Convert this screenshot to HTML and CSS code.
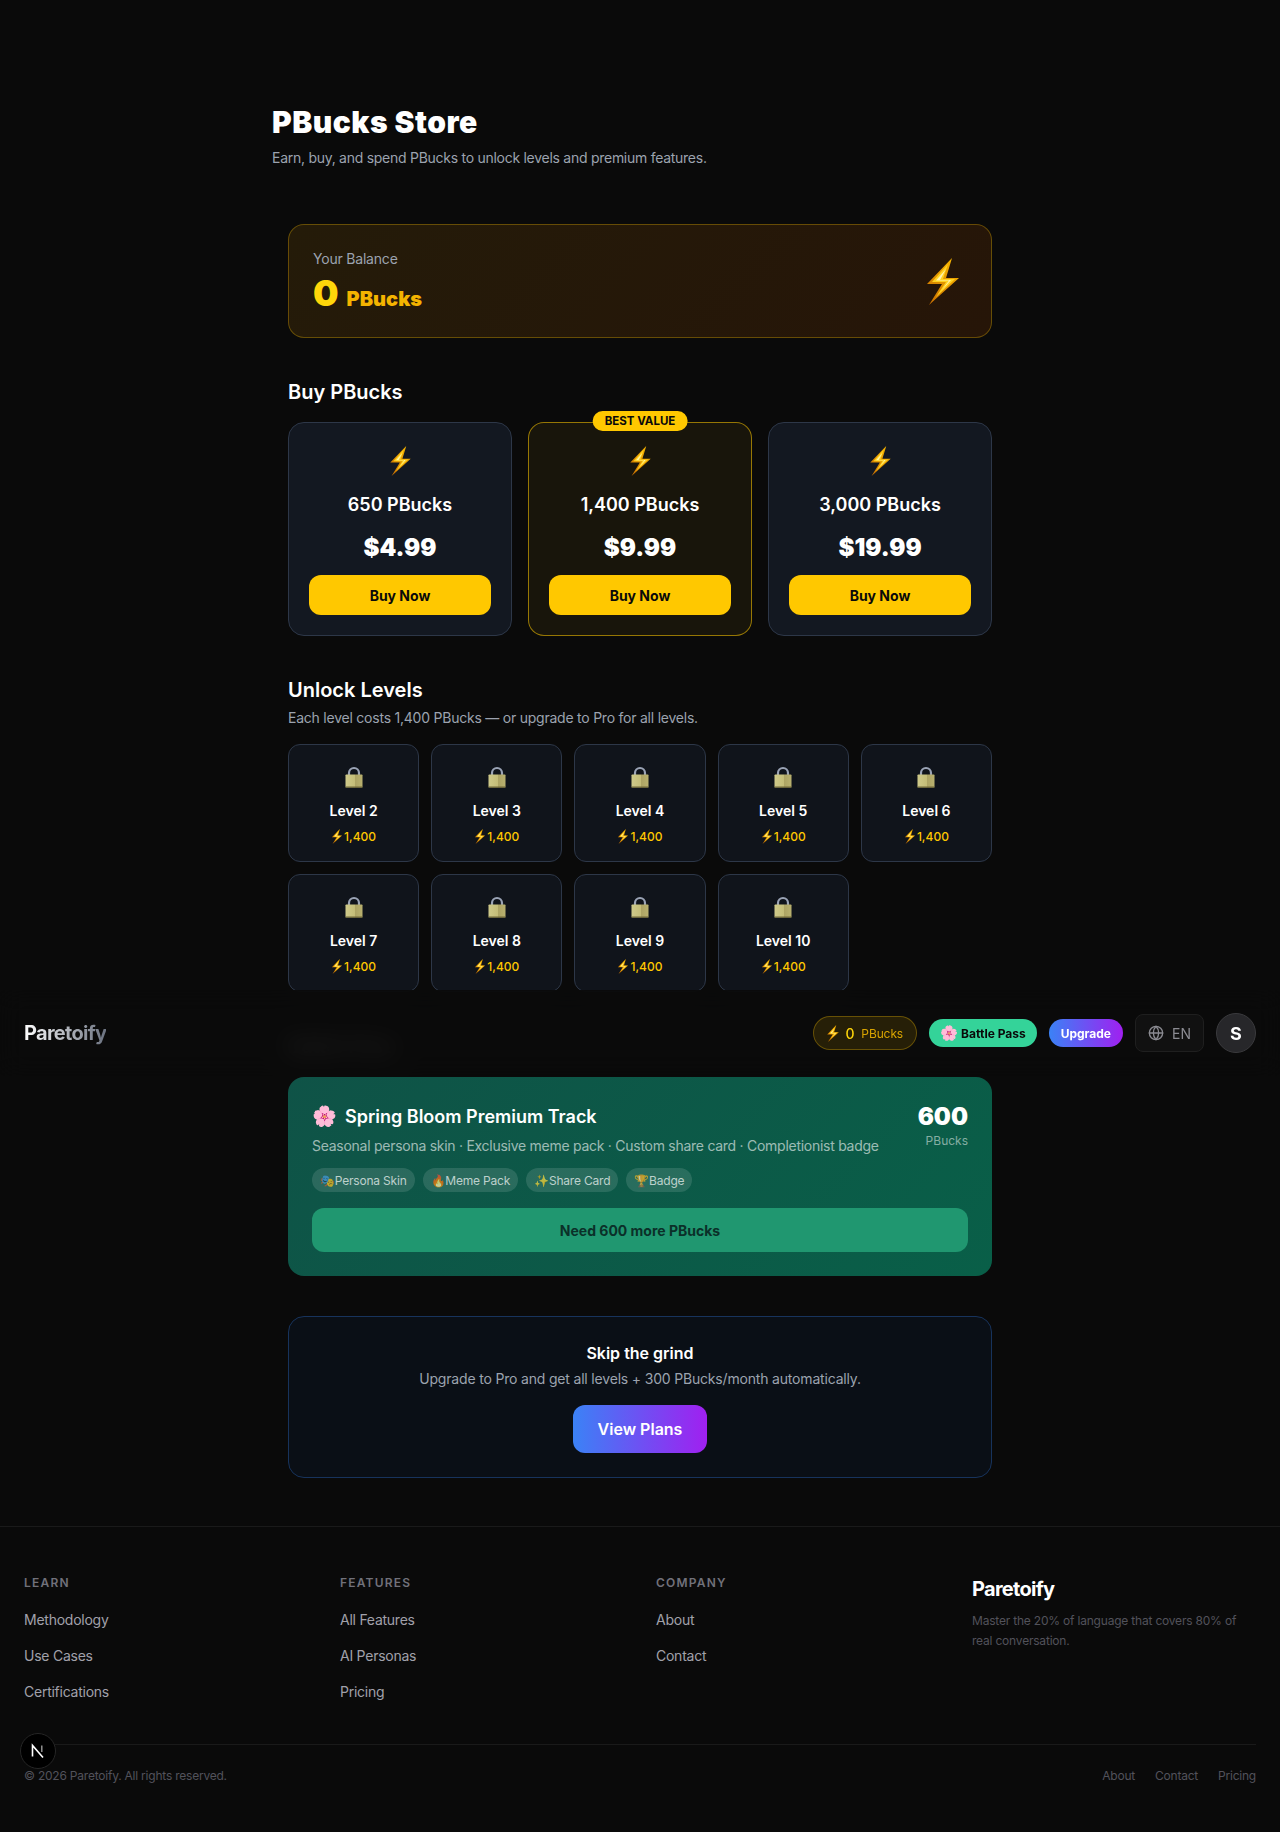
FILE: index.html
```html
<!DOCTYPE html>
<html lang="en">
<head>
    <meta charset="UTF-8">
    <meta name="viewport" content="width=device-width, initial-scale=1.0">
    <title>PBucks Store - Paretoify</title>
    <link rel="stylesheet" href="styles.css">
</head>
<body>
    <!-- shared icons -->
    <svg class="icon-sprite" width="0" height="0">
        <defs>
            <linearGradient id="boltEdge" x1="0.8" y1="0" x2="0.1" y2="1">
                <stop offset="0" stop-color="#f7b500"/>
                <stop offset="1" stop-color="#c96f00"/>
            </linearGradient>
            <linearGradient id="lockBody" x1="0" y1="0" x2="1" y2="0">
                <stop offset="0" stop-color="#cfca8a"/>
                <stop offset="0.55" stop-color="#c4bd78"/>
                <stop offset="0.56" stop-color="#aca363"/>
                <stop offset="1" stop-color="#b9b16f"/>
            </linearGradient>
            <symbol id="bolt" viewBox="0 0 32 47">
                <path d="M25 0 0 26h15L2 47l30-27H19z" fill="url(#boltEdge)"/>
                <path d="M21 6 5 24h14L9 39l19-18H16z" fill="#ffd21f"/>
                <path d="M19 11 9 22.500h13L15 32l9-10H13z" fill="#fff3b0"/>
            </symbol>
            <symbol id="lock" viewBox="0 0 18 22">
                <path d="M4 10V7a5 5 0 0 1 10 0v3" fill="none" stroke="#9aa3b5" stroke-width="2.200"/>
                <rect x="0.500" y="8.500" width="17" height="13" rx="0.800" fill="url(#lockBody)"/>
                <rect x="0.500" y="20.500" width="17" height="1.200" fill="#6e6738"/>
            </symbol>
        </defs>
    </svg>

    <header class="navbar">
        <a href="#" class="nav-logo">Paretoify</a>
        <div class="nav-actions">
            <a href="#" class="nav-balance"><svg class="bolt-nav"><use href="#bolt"/></svg><b>0</b><span>PBucks</span></a>
            <a href="#" class="nav-pass"><span class="nav-flower">🌸</span>Battle Pass</a>
            <a href="#" class="nav-upgrade">Upgrade</a>
            <button class="nav-lang">
                <svg width="16" height="16" viewBox="0 0 24 24" fill="none" stroke="currentColor" stroke-width="2" stroke-linecap="round" stroke-linejoin="round"><circle cx="12" cy="12" r="10"/><path d="M12 2a14.500 14.500 0 0 0 0 20 14.500 14.500 0 0 0 0-20"/><path d="M2 12h20"/></svg>
                EN
            </button>
            <div class="nav-avatar">S</div>
        </div>
    </header>

    <main class="store">
        <div class="store-head">
            <h1 class="store-title">PBucks Store</h1>
            <p class="store-subtitle">Earn, buy, and spend PBucks to unlock levels and premium features.</p>
        </div>

        <div class="store-body">
            <section class="balance-card">
                <div class="balance-info">
                    <p class="balance-label">Your Balance</p>
                    <p class="balance-value"><b>0</b><span>PBucks</span></p>
                </div>
                <svg class="bolt-large"><use href="#bolt"/></svg>
            </section>

            <section class="section">
                <h2 class="section-title">Buy PBucks</h2>
                <div class="packs">
                    <div class="pack">
                        <div class="pack-icon"><svg class="bolt-pack"><use href="#bolt"/></svg></div>
                        <div class="pack-name">650 PBucks</div>
                        <div class="pack-price">$4.99</div>
                        <button class="pack-btn">Buy Now</button>
                    </div>
                    <div class="pack pack-best">
                        <span class="pack-badge">BEST VALUE</span>
                        <div class="pack-icon"><svg class="bolt-pack"><use href="#bolt"/></svg></div>
                        <div class="pack-name">1,400 PBucks</div>
                        <div class="pack-price">$9.99</div>
                        <button class="pack-btn">Buy Now</button>
                    </div>
                    <div class="pack">
                        <div class="pack-icon"><svg class="bolt-pack"><use href="#bolt"/></svg></div>
                        <div class="pack-name">3,000 PBucks</div>
                        <div class="pack-price">$19.99</div>
                        <button class="pack-btn">Buy Now</button>
                    </div>
                </div>
            </section>

            <section class="section">
                <h2 class="section-title section-title-tight">Unlock Levels</h2>
                <p class="section-note">Each level costs 1,400 PBucks — or upgrade to Pro for all levels.</p>
                <div class="levels">
                    <div class="level"><div class="level-lock"><svg class="lock-icon"><use href="#lock"/></svg></div><div class="level-name">Level 2</div><div class="level-cost"><svg class="bolt-small"><use href="#bolt"/></svg>1,400</div></div>
                    <div class="level"><div class="level-lock"><svg class="lock-icon"><use href="#lock"/></svg></div><div class="level-name">Level 3</div><div class="level-cost"><svg class="bolt-small"><use href="#bolt"/></svg>1,400</div></div>
                    <div class="level"><div class="level-lock"><svg class="lock-icon"><use href="#lock"/></svg></div><div class="level-name">Level 4</div><div class="level-cost"><svg class="bolt-small"><use href="#bolt"/></svg>1,400</div></div>
                    <div class="level"><div class="level-lock"><svg class="lock-icon"><use href="#lock"/></svg></div><div class="level-name">Level 5</div><div class="level-cost"><svg class="bolt-small"><use href="#bolt"/></svg>1,400</div></div>
                    <div class="level"><div class="level-lock"><svg class="lock-icon"><use href="#lock"/></svg></div><div class="level-name">Level 6</div><div class="level-cost"><svg class="bolt-small"><use href="#bolt"/></svg>1,400</div></div>
                    <div class="level"><div class="level-lock"><svg class="lock-icon"><use href="#lock"/></svg></div><div class="level-name">Level 7</div><div class="level-cost"><svg class="bolt-small"><use href="#bolt"/></svg>1,400</div></div>
                    <div class="level"><div class="level-lock"><svg class="lock-icon"><use href="#lock"/></svg></div><div class="level-name">Level 8</div><div class="level-cost"><svg class="bolt-small"><use href="#bolt"/></svg>1,400</div></div>
                    <div class="level"><div class="level-lock"><svg class="lock-icon"><use href="#lock"/></svg></div><div class="level-name">Level 9</div><div class="level-cost"><svg class="bolt-small"><use href="#bolt"/></svg>1,400</div></div>
                    <div class="level"><div class="level-lock"><svg class="lock-icon"><use href="#lock"/></svg></div><div class="level-name">Level 10</div><div class="level-cost"><svg class="bolt-small"><use href="#bolt"/></svg>1,400</div></div>
                </div>
            </section>

            <section class="section">
                <h2 class="section-title section-title-pass">Battle Pass</h2>
                <div class="track">
                    <div class="track-top">
                        <div>
                            <h3 class="track-title"><span class="track-flower">🌸</span>Spring Bloom Premium Track</h3>
                            <p class="track-desc">Seasonal persona skin · Exclusive meme pack · Custom share card · Completionist badge</p>
                            <div class="track-chips">
                                <span class="chip">🎭Persona Skin</span>
                                <span class="chip">🔥Meme Pack</span>
                                <span class="chip">✨Share Card</span>
                                <span class="chip">🏆Badge</span>
                            </div>
                        </div>
                        <div class="track-cost">
                            <div class="track-amount">600</div>
                            <div class="track-unit">PBucks</div>
                        </div>
                    </div>
                    <button class="track-btn">Need 600 more PBucks</button>
                </div>
            </section>

            <section class="skip-card">
                <h3 class="skip-title">Skip the grind</h3>
                <p class="skip-text">Upgrade to Pro and get all levels + 300 PBucks/month automatically.</p>
                <a href="#" class="skip-btn">View Plans</a>
            </section>
        </div>
    </main>

    <footer class="footer">
        <div class="footer-grid">
            <div>
                <h4 class="footer-heading">LEARN</h4>
                <a href="#" class="footer-link">Methodology</a>
                <a href="#" class="footer-link">Use Cases</a>
                <a href="#" class="footer-link">Certifications</a>
            </div>
            <div>
                <h4 class="footer-heading">FEATURES</h4>
                <a href="#" class="footer-link">All Features</a>
                <a href="#" class="footer-link">AI Personas</a>
                <a href="#" class="footer-link">Pricing</a>
            </div>
            <div>
                <h4 class="footer-heading">COMPANY</h4>
                <a href="#" class="footer-link">About</a>
                <a href="#" class="footer-link">Contact</a>
            </div>
            <div>
                <div class="footer-brand">Paretoify</div>
                <p class="footer-about">Master the 20% of language that covers 80% of real conversation.</p>
            </div>
        </div>
        <div class="footer-bottom">
            <span>© 2026 Paretoify. All rights reserved.</span>
            <div class="footer-bottom-links">
                <a href="#">About</a>
                <a href="#">Contact</a>
                <a href="#">Pricing</a>
            </div>
        </div>
    </footer>

    <div class="dev-badge">
        <svg width="18" height="18" viewBox="0 0 18 18" fill="none"><path d="M3.500 14.500V3.500L14 15.500" stroke="#fff" stroke-width="1.600"/><path d="M12.800 3.500V10" stroke="#999" stroke-width="1.400"/></svg>
    </div>
</body>
</html>
```
FILE: styles.css
```css
* {
    margin: 0;
    padding: 0;
    box-sizing: border-box;
}

body {
    font-family: Inter, "Noto Sans", sans-serif;
    background: #0a0a0a;
    color: #fff;
    min-height: 100vh;
    position: relative;
}

a {
    text-decoration: none;
    color: inherit;
}

button {
    font-family: inherit;
    border: none;
    cursor: pointer;
}

.icon-sprite {
    display: block;
    position: absolute;
}

.bolt-large {
    width: 32px;
    height: 47px;
    margin-right: 8px;
}

.bolt-pack {
    width: 21px;
    height: 30px;
}

.bolt-nav {
    width: 12px;
    height: 17px;
}

.bolt-small {
    width: 12px;
    height: 15px;
    vertical-align: -3px;
    margin-right: 1px;
}

.lock-icon {
    width: 18px;
    height: 22px;
}

.navbar {
    position: absolute;
    top: 990px;
    left: 0;
    right: 0;
    height: 86px;
    padding: 0 24px;
    display: flex;
    align-items: center;
    justify-content: space-between;
    background: rgba(10, 10, 10, 0.9);
    backdrop-filter: blur(12px);
    z-index: 10;
}

.nav-logo {
    font-size: 20px;
    font-weight: 700;
    letter-spacing: -0.7px;
    background: linear-gradient(90deg, #fff, #6b7280);
    -webkit-background-clip: text;
    background-clip: text;
    color: transparent;
}

.nav-actions {
    display: flex;
    align-items: center;
    gap: 12px;
}

.nav-balance {
    height: 34px;
    padding: 0 13px;
    display: flex;
    align-items: center;
    gap: 6px;
    border: 1px solid rgba(255, 200, 0, 0.3);
    border-radius: 17px;
    background: rgba(255, 200, 0, 0.12);
    font-size: 12px;
    letter-spacing: -0.1px;
    color: #d9a400;
}

.nav-balance b {
    font-size: 14px;
    font-weight: 500;
    color: #ffd60a;
    margin-right: 1px;
}

.nav-pass {
    height: 28px;
    padding: 0 11px;
    display: flex;
    align-items: center;
    gap: 3px;
    border-radius: 14px;
    background: #34d399;
    color: #0a0a0a;
    font-size: 12px;
    font-weight: 700;
}

.nav-flower {
    font-size: 14.500px;
}

.nav-upgrade {
    height: 28px;
    padding: 0 12px;
    display: flex;
    align-items: center;
    border-radius: 14px;
    background: linear-gradient(90deg, #3b82f6, #a020f0);
    font-size: 12px;
    font-weight: 700;
}

.nav-lang {
    height: 38px;
    padding: 0 12px;
    display: flex;
    align-items: center;
    gap: 8px;
    border: 1px solid #1f1f1f;
    border-radius: 8px;
    background: #111;
    color: #8b8b92;
    font-size: 14px;
}

.nav-avatar {
    width: 40px;
    height: 40px;
    display: flex;
    align-items: center;
    justify-content: center;
    border: 1px solid #3a3a3d;
    border-radius: 50%;
    background: #27272a;
    font-size: 18px;
    font-weight: 700;
}

.store {
    width: 736px;
    margin: 0 auto;
    padding-top: 104px;
}

.store-head {
    margin-bottom: 56px;
}

.store-title {
    font-size: 30px;
    line-height: 36px;
    font-weight: 900;
    letter-spacing: 0.5px;
    margin-bottom: 8px;
}

.store-subtitle {
    font-size: 14px;
    line-height: 20px;
    letter-spacing: -0.27px;
    color: #9ca3af;
}

.store-body {
    padding: 0 16px;
}

.balance-card {
    height: 114px;
    padding: 0 24px;
    display: flex;
    align-items: center;
    justify-content: space-between;
    border: 1px solid rgba(255, 200, 0, 0.3);
    border-radius: 16px;
    background: linear-gradient(135deg, #241b09, #261508);
}

.balance-info {
    align-self: flex-start;
    padding-top: 24px;
}

.balance-label {
    font-size: 14px;
    line-height: 20px;
    letter-spacing: -0.2px;
    color: #9ca3af;
    margin-bottom: 4px;
}

.balance-value {
    display: flex;
    align-items: baseline;
    gap: 8px;
    line-height: 40px;
}

.balance-value b {
    font-size: 36px;
    font-weight: 900;
    color: #ffd60a;
}

.balance-value span {
    font-size: 20px;
    font-weight: 900;
    color: #f4b400;
}

.section {
    margin-top: 40px;
}

.section-title {
    font-size: 20px;
    line-height: 28px;
    font-weight: 600;
    margin-bottom: 16px;
}

.section-title-tight {
    margin-bottom: 4px;
}

.section-title-pass {
    margin-bottom: 17px;
}

.section-note {
    font-size: 14px;
    line-height: 20px;
    letter-spacing: -0.23px;
    color: #9ca3af;
    margin-bottom: 16px;
}

.packs {
    display: grid;
    grid-template-columns: repeat(3, 1fr);
    gap: 16px;
}

.pack {
    position: relative;
    padding: 20px;
    text-align: center;
    border: 1px solid #2d3748;
    border-radius: 16px;
    background: #131821;
}

.pack-best {
    border-color: rgba(255, 200, 0, 0.55);
    background: #18150b;
}

.pack-badge {
    position: absolute;
    top: -12px;
    left: 50%;
    transform: translateX(-50%);
    height: 20px;
    padding: 0 12px;
    display: flex;
    align-items: center;
    white-space: nowrap;
    border-radius: 10px;
    background: #ffc800;
    color: #0a0a0a;
    font-size: 11.500px;
    font-weight: 700;
}

.pack-icon {
    height: 36px;
    display: flex;
    align-items: center;
    justify-content: center;
    margin-bottom: 12px;
}

.pack-name {
    font-size: 18px;
    line-height: 28px;
    font-weight: 600;
    margin-bottom: 13px;
}

.pack-price {
    font-size: 24px;
    line-height: 32px;
    font-weight: 900;
    margin-bottom: 11px;
}

.pack-btn {
    display: block;
    width: 100%;
    height: 40px;
    border-radius: 12px;
    background: #ffc800;
    color: #0a0a0a;
    font-size: 14px;
    font-weight: 700;
}

.levels {
    display: grid;
    grid-template-columns: repeat(5, 1fr);
    gap: 12px;
}

.level {
    height: 118px;
    padding: 16px 8px;
    text-align: center;
    border: 1px solid #2d3748;
    border-radius: 12px;
    background: #10141b;
}

.level-lock {
    height: 32px;
    display: flex;
    align-items: center;
    justify-content: center;
    margin-bottom: 8px;
}

.level-name {
    font-size: 14px;
    line-height: 20px;
    font-weight: 600;
    margin-bottom: 8px;
}

.level-cost {
    font-size: 12px;
    line-height: 16px;
    font-weight: 500;
    color: #ffc800;
}

.track {
    padding: 24px;
    border-radius: 16px;
    background: linear-gradient(135deg, #0f5347, #095f48);
}

.track-top {
    display: flex;
    justify-content: space-between;
    align-items: flex-start;
}

.track-title {
    font-size: 18px;
    height: 30px;
    font-weight: 600;
    display: flex;
    align-items: center;
    gap: 8px;
    margin-bottom: 5px;
}

.track-flower {
    font-size: 20px;
}

.track-desc {
    font-size: 14px;
    line-height: 20px;
    letter-spacing: -0.27px;
    color: rgba(255, 255, 255, 0.6);
    margin-bottom: 12px;
}

.track-chips {
    display: flex;
    gap: 8px;
    margin-bottom: 16px;
}

.chip {
    height: 24px;
    padding: 0 8px;
    display: flex;
    align-items: center;
    border-radius: 12px;
    background: rgba(255, 255, 255, 0.12);
    color: rgba(255, 255, 255, 0.7);
    font-size: 12px;
    letter-spacing: -0.2px;
}

.track-cost {
    text-align: right;
}

.track-amount {
    font-size: 24px;
    line-height: 32px;
    font-weight: 900;
}

.track-unit {
    font-size: 12px;
    line-height: 16px;
    color: rgba(255, 255, 255, 0.5);
}

.track-btn {
    display: block;
    width: 100%;
    height: 44px;
    border-radius: 12px;
    background: #209770;
    color: #0b3029;
    font-size: 14px;
    font-weight: 700;
}

.skip-card {
    margin-top: 40px;
    height: 162px;
    padding-top: 24px;
    text-align: center;
    border: 1px solid #17335c;
    border-radius: 16px;
    background: #0a0f16;
}

.skip-title {
    font-size: 16px;
    line-height: 24px;
    font-weight: 600;
    margin-bottom: 4px;
}

.skip-text {
    font-size: 14px;
    line-height: 20px;
    letter-spacing: -0.18px;
    color: #9ca3af;
    margin-bottom: 16px;
}

.skip-btn {
    display: inline-flex;
    align-items: center;
    justify-content: center;
    width: 134px;
    height: 48px;
    border-radius: 12px;
    background: linear-gradient(90deg, #3b82f6, #a020f0);
    font-size: 16px;
    font-weight: 600;
}

.footer {
    margin-top: 48px;
    padding: 48px 24px 0;
    border-top: 1px solid #1a1a1a;
}

.footer-grid {
    display: grid;
    grid-template-columns: repeat(4, 1fr);
    gap: 32px;
    height: 169px;
}

.footer-heading {
    font-size: 12px;
    line-height: 16px;
    font-weight: 600;
    letter-spacing: 1.2px;
    color: #71717a;
    margin-bottom: 19px;
}

.footer-link {
    display: block;
    font-size: 14px;
    line-height: 20px;
    letter-spacing: -0.25px;
    color: #a1a1aa;
    margin-bottom: 16px;
}

.footer-brand {
    font-size: 20px;
    line-height: 28px;
    font-weight: 700;
    letter-spacing: -0.7px;
    margin-bottom: 8px;
}

.footer-about {
    font-size: 12px;
    line-height: 20px;
    letter-spacing: -0.2px;
    color: #52525b;
}

.footer-bottom {
    border-top: 1px solid #1a1a1a;
    padding-top: 23px;
    display: flex;
    justify-content: space-between;
    font-size: 12px;
    line-height: 16px;
    letter-spacing: -0.22px;
    color: #52525b;
}

.footer-bottom-links {
    display: flex;
    gap: 20px;
}

.dev-badge {
    position: fixed;
    left: 20px;
    bottom: 63px;
    width: 36px;
    height: 36px;
    display: flex;
    align-items: center;
    justify-content: center;
    border: 1px solid #262626;
    border-radius: 50%;
    background: #000;
}
```
